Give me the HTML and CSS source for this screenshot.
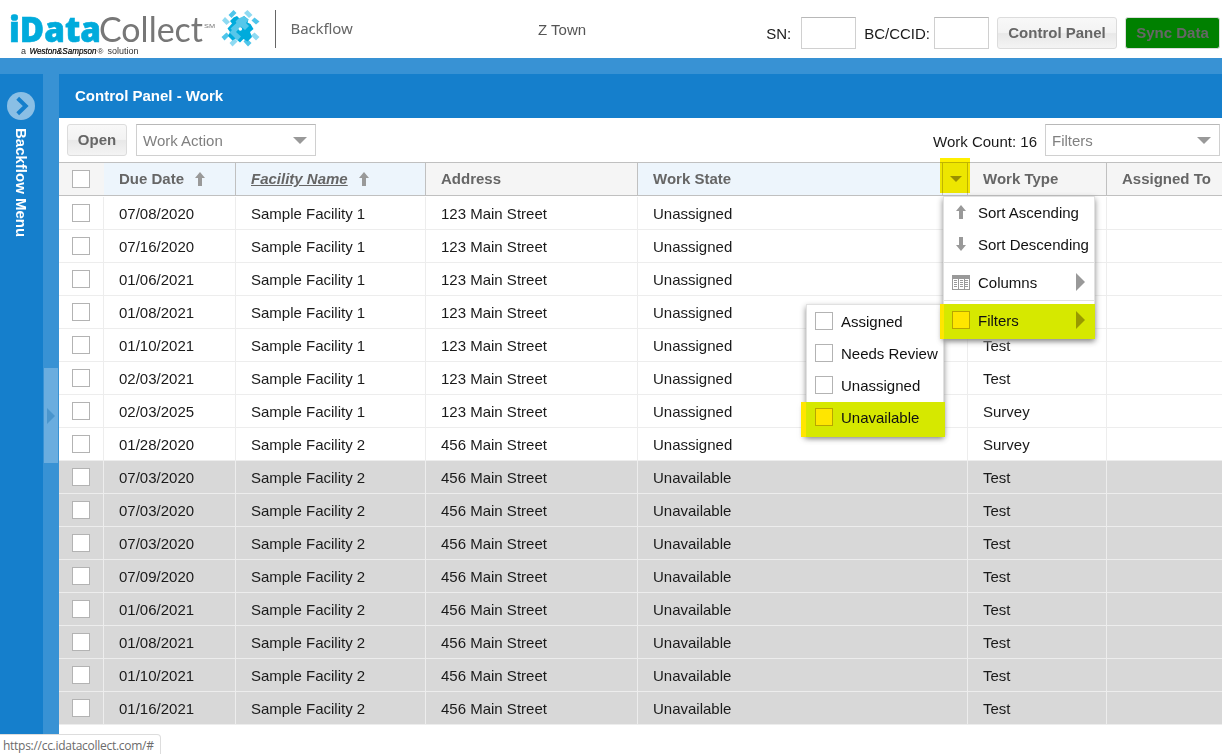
FILE: index.html
```html
<!DOCTYPE html>
<html lang="en">
<head>
<meta charset="utf-8">
<title>iDataCollect - Backflow</title>
<link rel="stylesheet" href="styles.css">
</head>
<body>
<div class="app">
  <header class="topbar">
    <svg class="logo" width="266" height="58" viewBox="0 0 266 58">
      <text class="logo-bold" x="9" y="42" textLength="92" lengthAdjust="spacingAndGlyphs">iData</text>
      <text class="logo-light" x="99" y="42" textLength="104" lengthAdjust="spacingAndGlyphs">Collect</text>
      <text class="logo-mark" x="204" y="28" textLength="11" lengthAdjust="spacingAndGlyphs">SM</text>
      <text class="logo-sub" x="21" y="54">a</text>
      <text class="logo-sub logo-brand" x="29.500" y="54" textLength="67" lengthAdjust="spacingAndGlyphs">Weston&amp;Sampson</text>
      <text class="logo-sub logo-reg" x="97.500" y="54">®</text>
      <text class="logo-sub" x="107.500" y="54" textLength="31" lengthAdjust="spacingAndGlyphs">solution</text>
      <g fill="#4fc5ea">
        <path d="M233.500 10l3 3-5 5-3-3z"/><path d="M251.500 20.500l3-3 5 4-3.500 3z"/>
        <path d="M221.500 37l5-4.500 3 3-5 5z"/><path d="M243.500 41.500l3-3.500 5 5-3.500 3.500z"/>
      </g>
      <g fill="#8edaf2">
        <path d="M244 13l3.500-3 5 5-3.500 3z"/><path d="M222 20.500l3-3.500 5 5-3.500 3z"/>
        <path d="M251 35.500l3.500-3 5 4.500-3.500 3.500z"/><path d="M229.500 43l5-5 3 3.500-5 5z"/>
      </g>
      <path fill="#00abdc" d="M233.500 17.500l3.500-1.500 3.500 3.500L244 16l4.500 3.500-1 3 3 1.500 3 5-3.500 3 2 5-4.500 4.500-4-2.500-3.500 3.500-4.500-4-3 2-4.500-4.500 2-4-2.500-3.500 4.500-5-2-2.500z"/>
      <path fill="#56c7ea" d="M244 16l4.500 3.500-2.500 3.500 3 3-4 4-4-3.500-5 5.500 5 4.500-3.500 4-8-8 2.500-2.500-1.500-1.500 6-5.500-1-1.500 3-3z"/>
      <circle cx="240.300" cy="29" r="1.800" fill="#fff"/>
    </svg>
    <span class="divider"></span>
    <span class="product">Backflow</span>
    <span class="town">Z Town</span>
    <div class="lookup">
      <label class="lab-sn">SN:</label><input class="field" type="text">
      <label class="lab-bc">BC/CCID:</label><input class="field" type="text">
      <button class="btn btn-panel">Control Panel</button>
      <button class="btn btn-sync">Sync Data</button>
    </div>
  </header>
  <div class="workspace">
    <aside class="sidebar">
      <svg width="28" height="28" viewBox="0 0 28 28"><circle cx="14" cy="14" r="14" fill="#8abfe5"/><path d="M10.700 6.300L18.700 14l-8 7.700" fill="none" stroke="#157fcc" stroke-width="4"/></svg>
      <span class="sidebar-title">Backflow Menu</span>
    </aside>
    <div class="splitter"><div class="handle"><span class="handle-arrow"></span></div></div>
    <main class="panel">
      <h1 class="panel-title">Control Panel - Work</h1>
      <div class="toolbar">
        <button class="btn btn-open">Open</button>
        <div class="combo combo-action">Work Action<i class="caret"></i></div>
        <span class="count">Work Count: 16</span>
        <div class="combo combo-filter">Filters<i class="caret"></i></div>
      </div>
      <div class="row head">
        <div class="check-cell"><i class="box"></i></div>
        <div class="sorted">Due Date<svg class="arrow" width="10" height="14"><path d="M5 0l5 6H7v8H3V6H0z"/></svg></div>
        <div class="sorted"><span class="link">Facility Name</span><svg class="arrow" width="10" height="14"><path d="M5 0l5 6H7v8H3V6H0z"/></svg></div>
        <div>Address</div><div class="sorted state-head">Work State<span class="trigger"><i class="caret small"></i><i class="marker"></i></span></div><div>Work Type</div><div>Assigned To</div>
      </div>
      <div class="rows">
        <div class="row"><div class="check-cell"><i class="box"></i></div><div>07/08/2020</div><div>Sample Facility 1</div><div>123 Main Street</div><div>Unassigned</div><div></div><div></div></div>
        <div class="row"><div class="check-cell"><i class="box"></i></div><div>07/16/2020</div><div>Sample Facility 1</div><div>123 Main Street</div><div>Unassigned</div><div></div><div></div></div>
        <div class="row"><div class="check-cell"><i class="box"></i></div><div>01/06/2021</div><div>Sample Facility 1</div><div>123 Main Street</div><div>Unassigned</div><div></div><div></div></div>
        <div class="row"><div class="check-cell"><i class="box"></i></div><div>01/08/2021</div><div>Sample Facility 1</div><div>123 Main Street</div><div>Unassigned</div><div></div><div></div></div>
        <div class="row"><div class="check-cell"><i class="box"></i></div><div>01/10/2021</div><div>Sample Facility 1</div><div>123 Main Street</div><div>Unassigned</div><div>Test</div><div></div></div>
        <div class="row"><div class="check-cell"><i class="box"></i></div><div>02/03/2021</div><div>Sample Facility 1</div><div>123 Main Street</div><div>Unassigned</div><div>Test</div><div></div></div>
        <div class="row"><div class="check-cell"><i class="box"></i></div><div>02/03/2025</div><div>Sample Facility 1</div><div>123 Main Street</div><div>Unassigned</div><div>Survey</div><div></div></div>
        <div class="row"><div class="check-cell"><i class="box"></i></div><div>01/28/2020</div><div>Sample Facility 2</div><div>456 Main Street</div><div>Unassigned</div><div>Survey</div><div></div></div>
        <div class="row off"><div class="check-cell"><i class="box"></i></div><div>07/03/2020</div><div>Sample Facility 2</div><div>456 Main Street</div><div>Unavailable</div><div>Test</div><div></div></div>
        <div class="row off"><div class="check-cell"><i class="box"></i></div><div>07/03/2020</div><div>Sample Facility 2</div><div>456 Main Street</div><div>Unavailable</div><div>Test</div><div></div></div>
        <div class="row off"><div class="check-cell"><i class="box"></i></div><div>07/03/2020</div><div>Sample Facility 2</div><div>456 Main Street</div><div>Unavailable</div><div>Test</div><div></div></div>
        <div class="row off"><div class="check-cell"><i class="box"></i></div><div>07/09/2020</div><div>Sample Facility 2</div><div>456 Main Street</div><div>Unavailable</div><div>Test</div><div></div></div>
        <div class="row off"><div class="check-cell"><i class="box"></i></div><div>01/06/2021</div><div>Sample Facility 2</div><div>456 Main Street</div><div>Unavailable</div><div>Test</div><div></div></div>
        <div class="row off"><div class="check-cell"><i class="box"></i></div><div>01/08/2021</div><div>Sample Facility 2</div><div>456 Main Street</div><div>Unavailable</div><div>Test</div><div></div></div>
        <div class="row off"><div class="check-cell"><i class="box"></i></div><div>01/10/2021</div><div>Sample Facility 2</div><div>456 Main Street</div><div>Unavailable</div><div>Test</div><div></div></div>
        <div class="row off"><div class="check-cell"><i class="box"></i></div><div>01/16/2021</div><div>Sample Facility 2</div><div>456 Main Street</div><div>Unavailable</div><div>Test</div><div></div></div>
      </div>
    </main>
  </div>
  <div class="menu submenu">
    <div class="item"><i class="box"></i>Assigned</div>
    <div class="item"><i class="box"></i>Needs Review</div>
    <div class="item"><i class="box"></i>Unassigned</div>
    <div class="item active"><i class="box"></i>Unavailable</div>
  </div>
  <div class="menu mainmenu">
    <div class="item"><svg class="glyph" width="18" height="14"><path d="M9 0l5 6h-3v8H7V6H4z"/></svg>Sort Ascending</div>
    <div class="item"><svg class="glyph" width="18" height="14"><path d="M9 14l5-6h-3V0H7v8H4z"/></svg>Sort Descending</div>
    <hr class="sep">
    <div class="item"><svg class="glyph" width="18" height="15" shape-rendering="crispEdges"><path d="M0 0h18v15H0z"/><path class="cut" d="M1 4h5v10H1zM7 4h5v10H7zM13 4h4v10h-4z"/><path d="M2 5h3v1H2zM2 7h3v1H2zM2 9h3v1H2zM2 11h3v1H2zM8 5h3v1H8zM8 7h3v1H8zM8 9h3v1H8zM8 11h3v1H8zM13 5h3v1h-3zM13 7h3v1h-3zM13 9h3v1h-3zM13 11h3v1h-3z"/></svg>Columns<span class="next"></span></div>
    <hr class="sep">
    <div class="item active"><i class="box"></i>Filters<span class="next"></span></div>
  </div>
  <div class="status">https://cc.idatacollect.com/#</div>
</div>
</body>
</html>
```
FILE: styles.css
```css
* { box-sizing: border-box; }
body { margin: 0; background: #fff; font: 15px/20px "Liberation Sans", Arial, sans-serif; color: #1a1a1a; }
.app { position: relative; width: 1222px; height: 754px; overflow: hidden; }
.topbar { display: flex; height: 58px; align-items: flex-start; }
.logo { flex: none; }
.logo-bold { font: 800 35px "Open Sans", sans-serif; fill: #00abdc; stroke: #00abdc; stroke-width: .6px; }
.logo-light { font: 400 35px Lato, sans-serif; fill: #777; }
.logo-mark { font: 6px "Liberation Sans", sans-serif; fill: #777; }
.logo-sub { font: 9px "Liberation Sans", sans-serif; fill: #333; }
.logo-brand { font-style: italic; fill: #000; stroke: #000; stroke-width: .2px; }
.logo-reg { font-size: 8px; }
.divider { flex: none; width: 1px; height: 38px; margin: 10px 0 0 9px; background: #666; }
.product { flex: none; width: 262px; padding: 18px 0 0 14.5px; font: 15px/20px "Noto Sans", sans-serif; letter-spacing: -.1px; color: #666; }
.town { margin-top: 20px; color: #555; }
.lookup { display: flex; flex: 1; justify-content: flex-end; padding: 17px 2px 0 0; }
.lookup label { line-height: 34px; }
.lab-sn { margin-right: 10px; }
.lab-bc { margin: 0 4px 0 8px; }
.field { width: 55px; height: 32px; padding: 0; border: 1px solid #d0d0d0; border-top-color: #b8b8b8; background: #fff; }
.btn { height: 32px; padding: 0 0 1px; border: 1px solid #dcdcdc; border-radius: 3px; background: linear-gradient(#f8f8f8, #f3f3f3 48%, #e8e8e8 52%, #f4f4f4); font: bold 15px/20px "Liberation Sans", Arial, sans-serif; color: #666; }
.btn-panel { width: 120px; margin-left: 8px; }
.btn-sync { width: 95px; margin-left: 8px; background: #008000; }
.workspace { display: flex; height: 677px; padding-top: 16px; background: #3892d4; }
.sidebar { display: flex; flex-direction: column; align-items: center; width: 43px; padding-top: 18px; background: #157fcc; }
.sidebar svg { margin-right: 1px; }
.sidebar-title { margin: 8px 2px 0 0; writing-mode: vertical-rl; font-weight: bold; color: #fff; }
.splitter { display: flex; align-items: center; width: 16px; padding: 22px 0 0 1px; }
.handle { display: flex; align-items: center; width: 14px; height: 95px; padding-left: 3px; background: #6aaddf; }
.handle-arrow { border: 8px solid transparent; border-left-color: #4995cd; border-right: 0; }
.panel { flex: 1; min-width: 0; background: #fff; }
.panel-title { height: 44px; margin: 0; padding-left: 16px; background: #157fcc; font-size: 15px; line-height: 44px; color: #fff; }
.toolbar { display: flex; height: 44px; padding: 6px 2px 0 8px; }
.btn-open { width: 60px; }
.combo { display: flex; align-items: center; justify-content: space-between; height: 32px; padding: 2px 8px 0 6px; border: 1px solid #d0d0d0; border-top-color: #b8b8b8; color: #808080; }
.combo-action { width: 180px; margin-left: 9px; }
.combo-filter { width: 175px; }
.count { margin: 0 8px 0 auto; line-height: 35px; }
.caret { margin-bottom: 2px; border: 7px solid transparent; border-top-color: #999; border-bottom: 0; }
.row { display: grid; grid-template-columns: 45px 132px 190px 212px 330px 139px 1fr; grid-template-rows: 33px; height: 33px; }
.row > div { padding-left: 15px; border-right: 1px solid #ededed; border-bottom: 1px solid #ededed; line-height: 34px; white-space: nowrap; }
.row > .check-cell { padding: 7px 0 0 13px; }
.box { display: block; flex: none; width: 18px; height: 18px; border: 1px solid #b3b3b3; background: #fff; }
.row > div:last-child { border-right: 0; }
.off > div { background: #d8d8d8; }
.row.head { grid-template-rows: 32px; height: 34px; border: solid #c0c0c0; border-width: 1px 0; font-weight: bold; color: #666; }
.head > div { display: flex; align-items: center; border-color: #c0c0c0; border-bottom: 0; background: #f5f5f5; line-height: 32px; }
.head > .check-cell { align-items: flex-start; border-right: 0; }
.head > .sorted { background: #edf5fc; }
.link { font-style: italic; text-decoration: underline; }
.arrow { margin: 0 0 0 11px; fill: #999; }
.state-head { position: relative; }
.trigger { display: flex; align-items: center; justify-content: center; width: 25px; height: 32px; margin-left: auto; border-left: 1px solid #c0c0c0; }
.small { border-width: 6px 6px 0; margin: 0 0 1px 1px; }
.marker { position: absolute; top: -5px; right: -3px; width: 30px; height: 35px; background: #fff000; mix-blend-mode: multiply; }
.rows { padding-top: 1px; }
.menu { position: absolute; background: #fff; border: 1px solid #e1e1e1; box-shadow: 0 3px 6px #888; color: #111; }
.mainmenu { left: 943px; top: 196px; width: 152px; height: 142px; }
.submenu { left: 806px; top: 304px; width: 138px; height: 131px; }
.item { position: relative; display: flex; align-items: center; gap: 8px; height: 32px; padding-left: 8px; white-space: nowrap; }
.submenu .item { top: 1px; }
.item .box, .item .glyph { margin-bottom: 2px; }
.sep { height: 1px; margin: 1px 0 4px; border: 0; background: #e0e0e0; }
.glyph { fill: #999; }
.cut { fill: #fff; }
.next { margin: 0 9px 2px auto; border: 9px solid transparent; border-left-color: #999; border-right: 0; }
.active { z-index: 0; }
.active::before { content: ""; position: absolute; z-index: -1; inset: -1px -1px -2px -4px; border-left: 4px solid #ffe600; background: #d6e800; box-shadow: 0 3px 5px -2px #8888; }
.submenu .active::before { left: -6px; right: -2px; top: 0; bottom: -3px; border-left-width: 5px; }
.active .box { background: #ffe600; border-color: #b8a600; }
.active .next { border-left-color: #989900; }
.status { position: absolute; left: 0; top: 734px; width: 161px; height: 21px; padding: 1px 0 0 3px; border: 1px solid #ddd; border-left: 0; border-radius: 0 4px 0 0; background: #fff; font: 12px/20px "Open Sans", sans-serif; letter-spacing: -.28px; color: #6b6b6b; }
```
